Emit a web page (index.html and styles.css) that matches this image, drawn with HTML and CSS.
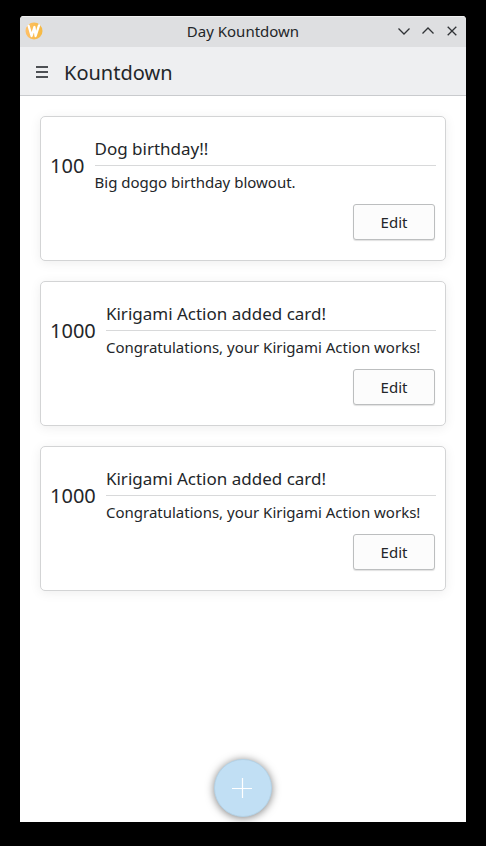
FILE: index.html
```html
<!DOCTYPE html>
<html lang="en">
<head>
<meta charset="utf-8">
<title>Day Kountdown</title>
<link rel="stylesheet" href="styles.css">
</head>
<body>
<div class="window">
  <div class="titlebar">
    <svg class="app-icon" width="18" height="18" viewBox="0 0 18 18">
      <defs><linearGradient id="g" x1="0" y1="0" x2="1" y2="0"><stop offset="0" stop-color="#ffc067"/><stop offset="1" stop-color="#f5b942"/></linearGradient></defs>
      <circle cx="9" cy="9" r="8.5" fill="url(#g)"/>
      <path d="M3.6 3.8L6.6 14L9.4 5L10.6 14L14 3.4" fill="none" stroke="#fff" stroke-width="2.3" stroke-linejoin="round" stroke-linecap="round"/>
    </svg>
    <span class="window-title">Day Kountdown</span>
    <div class="controls">
      <svg width="16" height="16" viewBox="0 0 16 16"><path d="M2.5 5.5L8 11L13.5 5.5"/></svg>
      <svg width="16" height="16" viewBox="0 0 16 16"><path d="M2.5 10.5L8 5L13.5 10.5"/></svg>
      <svg width="16" height="16" viewBox="0 0 16 16"><path d="M3.7 3.7L12.3 12.3M12.3 3.7L3.7 12.3"/></svg>
    </div>
  </div>
  <header class="header">
    <svg class="menu" width="12" height="12" viewBox="0 0 12 12"><path d="M0 1H12M0 6H12M0 11H12" stroke="#4d5054" stroke-width="2"/></svg>
    <h1>Kountdown</h1>
  </header>
  <main class="page">
    <article class="card">
      <div class="days">100</div>
      <div class="details">
        <h2>Dog birthday!!</h2>
        <p>Big doggo birthday blowout.</p>
        <button>Edit</button>
      </div>
    </article>
    <article class="card">
      <div class="days">1000</div>
      <div class="details">
        <h2>Kirigami Action added card!</h2>
        <p>Congratulations, your Kirigami Action works!</p>
        <button>Edit</button>
      </div>
    </article>
    <article class="card">
      <div class="days">1000</div>
      <div class="details">
        <h2>Kirigami Action added card!</h2>
        <p>Congratulations, your Kirigami Action works!</p>
        <button>Edit</button>
      </div>
    </article>
  </main>
  <button class="add" aria-label="Add">
    <svg width="20" height="20" viewBox="0 0 20 20"><path d="M10.5 0V20M0 10.5H20" stroke="#fff" stroke-width="1.2"/></svg>
  </button>
</div>
</body>
</html>
```
FILE: styles.css
```css
* { box-sizing: border-box; }
body {
  margin: 0;
  padding: 16px 20px 24px;
  height: 846px;
  background: #000;
  color: #232629;
  font-family: "Noto Sans", sans-serif;
  font-size: 15px;
}
h1, h2, p { margin: 0; font-weight: 400; }
.window {
  position: relative;
  display: flex;
  flex-direction: column;
  height: 806px;
  background: #fff;
  border-radius: 4px 4px 0 0;
  overflow: hidden;
}
.titlebar {
  display: grid;
  grid-template-columns: 72px 1fr 72px;
  align-items: center;
  height: 31px;
  padding: 0 6px 2px 5px;
  background: #dedfe1;
  border-top: 1px solid #f0f0f1;
}
.app-icon { display: block; }
.window-title { padding-left: 1px; text-align: center; line-height: 28px; }
.controls { display: flex; gap: 8px; justify-content: flex-end; }
.controls path { fill: none; stroke: #303336; stroke-width: 1.3; }
.header {
  display: flex;
  align-items: center;
  gap: 16px;
  height: 49px;
  padding: 3px 16px 0;
  background: #eeeff1;
  border-bottom: 1px solid #c9cbce;
}
.menu { margin-bottom: 1px; }
h1 { font-size: 20px; line-height: 28px; }
.page {
  display: flex;
  flex-direction: column;
  gap: 20px;
  padding: 20px;
}
.card {
  display: flex;
  gap: 10.2px;
  height: 145px;
  padding: 20px 9px 0 9px;
  background: #fff;
  border: 1px solid #d3d4d5;
  border-radius: 5px;
  box-shadow: 0 2px 12px rgba(0, 0, 0, .07);
}
.days { font-size: 20px; line-height: 28px; padding-top: 15px; }
.details { flex: 1; display: flex; flex-direction: column; }
h2 {
  height: 29px;
  font-size: 17px;
  line-height: 24px;
  border-bottom: 1px solid #d8d9da;
}
.details p { margin-top: 5px; line-height: 22px; }
.details button {
  align-self: flex-end;
  width: 82px;
  height: 36px;
  margin: 11px 1px 0 0;
  padding: 0;
  font: inherit;
  color: inherit;
  background: #fcfcfc;
  border: 1px solid #bcbebf;
  border-radius: 3px;
  box-shadow: 0 1px 1px rgba(0, 0, 0, .12);
}
.add {
  position: absolute;
  left: 194px;
  top: 743px;
  display: grid;
  place-items: center;
  width: 58px;
  height: 58px;
  padding: 0 2px 0 0;
  background: #c1dff4;
  border: 1px solid #b4d2e6;
  border-radius: 50%;
  box-shadow: 0 1px 9px rgba(0, 0, 0, .5);
}
```
